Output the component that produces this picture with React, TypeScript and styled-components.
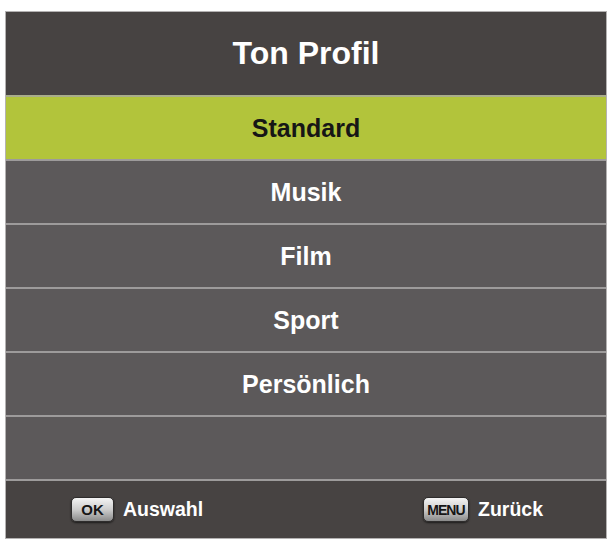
import React from 'react';
import styled, { createGlobalStyle } from 'styled-components';

const GlobalStyle = createGlobalStyle`
  body {
    margin: 0;
    background: #ffffff;
    font-family: 'Liberation Sans', Arial, sans-serif;
  }
`;

const Panel = styled.div`
  box-sizing: border-box;
  width: 602px;
  margin: 11px 0 0 5px;
  border: 1px solid #b4b2b2;
  background: #474342;
  display: flex;
  flex-direction: column;
`;

const Header = styled.div`
  height: 83px;
  display: flex;
  align-items: center;
  justify-content: center;
  color: #ffffff;
  font-size: 32px;
  font-weight: 700;
`;

const Row = styled.div<{ $active?: boolean }>`
  height: 62px;
  border-top: 2px solid ${(p) => (p.$active ? '#a9ad8a' : '#9d9b9b')};
  background: ${(p) => (p.$active ? '#b2c43b' : '#5c595a')};
  color: ${(p) => (p.$active ? '#161616' : '#ffffff')};
  display: flex;
  align-items: center;
  justify-content: center;
  font-size: 25px;
  font-weight: 700;
`;

const Footer = styled.div`
  height: 57px;
  border-top: 2px solid #9d9b9b;
  display: flex;
  align-items: center;
  justify-content: space-between;
  padding: 0 63px 0 65px;
`;

const Hint = styled.div`
  display: flex;
  align-items: center;
  gap: 9px;
  color: #ffffff;
  font-size: 19.5px;
  font-weight: 700;
`;

const Key = styled.span<{ $wide?: boolean }>`
  box-sizing: border-box;
  width: ${(p) => (p.$wide ? '46px' : '43px')};
  height: 25px;
  border-radius: 5px;
  border: 1px solid #2e2c2c;
  background: linear-gradient(#f4f4f4, #cdcdcd 50%, #8a8a8a);
  box-shadow: 0 1px 2px rgba(0, 0, 0, 0.6);
  display: flex;
  align-items: center;
  justify-content: center;
  color: #151515;
  font-size: ${(p) => (p.$wide ? '14px' : '15px')};
  font-weight: 700;
  letter-spacing: ${(p) => (p.$wide ? '-1px' : '0')};
`;

const items = ['Standard', 'Musik', 'Film', 'Sport', 'Persönlich', ''];

export default function App() {
  return (
    <>
      <GlobalStyle />
      <Panel>
        <Header>Ton Profil</Header>
        {items.map((label, i) => (
          <Row key={i} $active={i === 0}>
            {label}
          </Row>
        ))}
        <Footer>
          <Hint>
            <Key>OK</Key>
            Auswahl
          </Hint>
          <Hint>
            <Key $wide>MENU</Key>
            Zurück
          </Hint>
        </Footer>
      </Panel>
    </>
  );
}
